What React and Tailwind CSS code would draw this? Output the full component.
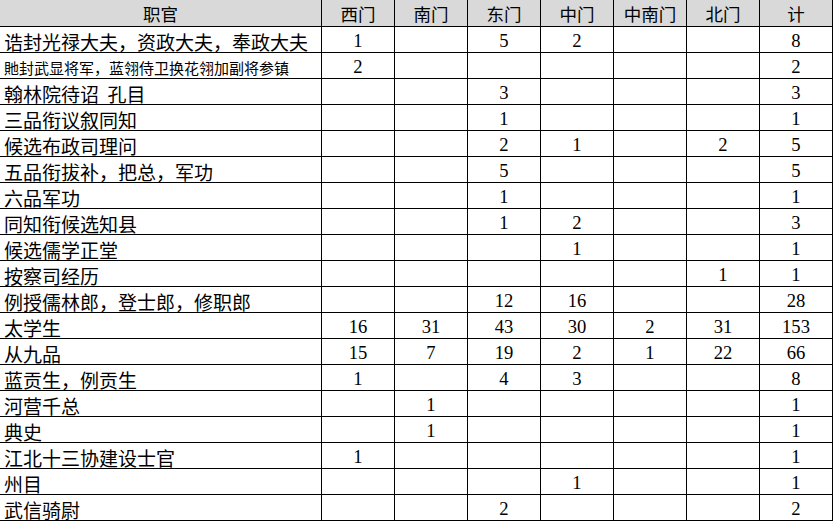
import React from "react";

const headers = ["职官", "西门", "南门", "东门", "中门", "中南门", "北门", "计"];

const rows = [
  ["诰封光禄大夫，资政大夫，奉政大夫", "1", "", "5", "2", "", "", "8"],
  ["貤封武显将军，蓝翎侍卫换花翎加副将参镇", "2", "", "", "", "", "", "2", true],
  ["翰林院待诏  孔目", "", "", "3", "", "", "", "3"],
  ["三品衔议叙同知", "", "", "1", "", "", "", "1"],
  ["候选布政司理问", "", "", "2", "1", "", "2", "5"],
  ["五品衔拔补，把总，军功", "", "", "5", "", "", "", "5"],
  ["六品军功", "", "", "1", "", "", "", "1"],
  ["同知衔候选知县", "", "", "1", "2", "", "", "3"],
  ["候选儒学正堂", "", "", "", "1", "", "", "1"],
  ["按察司经历", "", "", "", "", "", "1", "1"],
  ["例授儒林郎，登士郎，修职郎", "", "", "12", "16", "", "", "28"],
  ["太学生", "16", "31", "43", "30", "2", "31", "153"],
  ["从九品", "15", "7", "19", "2", "1", "22", "66"],
  ["蓝贡生，例贡生", "1", "", "4", "3", "", "", "8"],
  ["河营千总", "", "1", "", "", "", "", "1"],
  ["典史", "", "1", "", "", "", "", "1"],
  ["江北十三协建设士官", "1", "", "", "", "", "", "1"],
  ["州目", "", "", "", "1", "", "", "1"],
  ["武信骑尉", "", "", "2", "", "", "", "2"],
];

export default function App() {
  return (
    <div className="w-[833px] h-[521px] bg-white text-black overflow-hidden font-['Liberation_Serif','Noto_Sans_CJK_SC',serif]">
      <div className="grid grid-cols-[322px_repeat(7,73px)]">
        {headers.map((h, i) => (
          <div
            key={"h" + i}
            className="h-[27px] bg-[#d9d9d9] border-r border-b border-black flex items-center justify-center text-[17.5px] leading-none pt-[2px] font-['Noto_Sans_CJK_SC',sans-serif]"
          >
            {h}
          </div>
        ))}
        {rows.map((r, ri) =>
          r.slice(0, 8).map((c, ci) =>
            ci === 0 ? (
              <div
                key={ri + "-" + ci}
                className={
                  "h-[26px] border-r border-b border-black flex items-center pl-[4px] leading-none whitespace-pre pt-[3px] font-['Noto_Sans_CJK_SC',sans-serif] " +
                  (r[8] ? "text-[15px]" : "text-[19px]")
                }
              >
                {c}
              </div>
            ) : (
              <div
                key={ri + "-" + ci}
                className="h-[26px] border-r border-b border-black flex items-center justify-center text-[18.6px] leading-none pt-[3px]"
              >
                {c}
              </div>
            )
          )
        )}
      </div>
    </div>
  );
}
